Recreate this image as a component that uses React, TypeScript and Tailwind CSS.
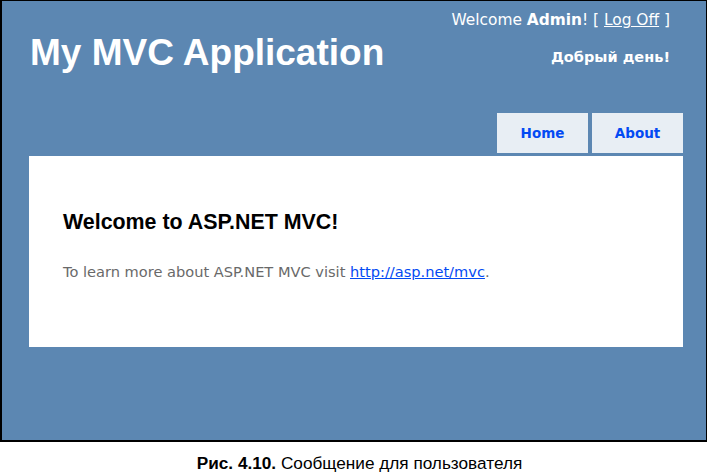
import React from "react";

const VERDANA = "font-['Verdana','DejaVu_Sans',sans-serif]";
const ARIAL = "font-['Arial','Liberation_Sans',sans-serif]";

function LoginDisplay() {
  return (
    <div className={`${VERDANA} text-right text-white pr-[36px]`}>
      <div className="pt-[10px] text-[15.4px] leading-[18px]">
        Welcome <b>Admin</b>! [ <a href="#" className="underline text-white">Log Off</a> ]
      </div>
      <div className="mt-[19px] text-[14.5px] leading-[18px] font-bold">Добрый день!</div>
    </div>
  );
}

function Menu() {
  const items = ["Home", "About"];
  return (
    <ul className={`${VERDANA} flex justify-end gap-[4px] pr-[23px] mt-[42px]`}>
      {items.map((item) => (
        <li key={item}>
          <a
            href="#"
            className="flex items-center justify-center w-[91px] h-[40px] bg-[#e8eef4] text-[#034af3] text-[13.5px] font-bold"
          >
            {item}
          </a>
        </li>
      ))}
    </ul>
  );
}

export default function App() {
  return (
    <div className="w-[707px] h-[473px] bg-white overflow-hidden">
      {/* Browser screenshot frame */}
      <div className="h-[442px] bg-[#5c87b2] border-t border-r border-black border-l-2 border-b-2">
        <div className="flex justify-between">
          <h1 className={`${ARIAL} pl-[28px] pt-[33px] text-[37px] leading-none font-bold text-white`}>
            My MVC Application
          </h1>
          <LoginDisplay />
        </div>

        <Menu />

        <div className="ml-[27px] mr-[23px] mt-[3px] h-[191px] bg-white pl-[34px] pt-[54px]">
          <h2 className={`${ARIAL} text-[21.4px] leading-[25px] font-bold text-black`}>
            Welcome to ASP.NET MVC!
          </h2>
          <p className={`${VERDANA} mt-[28px] text-[14.6px] leading-[18px] text-[#696969]`}>
            To learn more about ASP.NET MVC visit{" "}
            <a href="#" className="text-[#034af3] underline">
              http://asp.net/mvc
            </a>
            .
          </p>
        </div>
      </div>

      <p className={`${ARIAL} text-center text-[17.2px] leading-[20px] pt-[11px] pl-[12px] text-black`}>
        <b>Рис. 4.10.</b> Сообщение для пользователя
      </p>
    </div>
  );
}
